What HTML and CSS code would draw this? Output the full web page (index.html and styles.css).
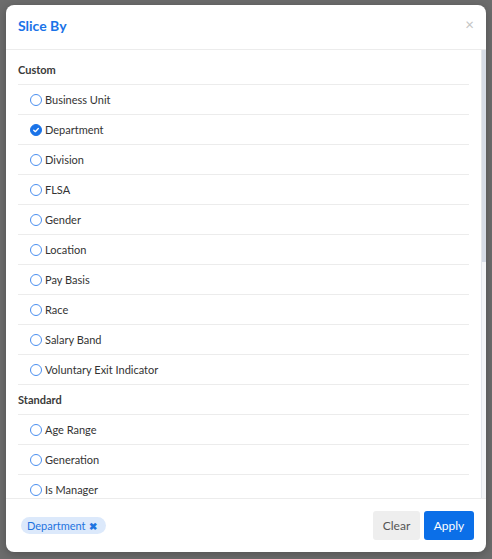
FILE: index.html
```html
<!DOCTYPE html>
<html lang="en">
<head>
    <meta charset="UTF-8">
    <title>Slice By</title>
    <link rel="stylesheet" href="styles.css">
</head>
<body>
    <div class="backdrop">
        <div class="modal">
            <div class="modal-header">
                <h2 class="modal-title">Slice By</h2>
                <span class="close-btn">&times;</span>
            </div>

            <div class="body-wrap">
                <div class="modal-body">
                    <div class="group-title">Custom</div>
                    <ul class="option-list">
                        <li class="option"><span class="radio"></span>Business Unit</li>
                        <li class="option"><span class="radio checked"><svg viewBox="0 0 12 12" width="12" height="12"><path d="M3.3 6.2 L5.2 8 L8.8 4.2" fill="none" stroke="#fff" stroke-width="1.6" stroke-linecap="round" stroke-linejoin="round"/></svg></span>Department</li>
                        <li class="option"><span class="radio"></span>Division</li>
                        <li class="option"><span class="radio"></span>FLSA</li>
                        <li class="option"><span class="radio"></span>Gender</li>
                        <li class="option"><span class="radio"></span>Location</li>
                        <li class="option"><span class="radio"></span>Pay Basis</li>
                        <li class="option"><span class="radio"></span>Race</li>
                        <li class="option"><span class="radio"></span>Salary Band</li>
                        <li class="option"><span class="radio"></span>Voluntary Exit Indicator</li>
                    </ul>

                    <div class="group-title">Standard</div>
                    <ul class="option-list">
                        <li class="option"><span class="radio"></span>Age Range</li>
                        <li class="option"><span class="radio"></span>Generation</li>
                        <li class="option"><span class="radio"></span>Is Manager</li>
                        <li class="option"><span class="radio"></span>Job Family</li>
                        <li class="option"><span class="radio"></span>Job Function</li>
                        <li class="option"><span class="radio"></span>Job Level</li>
                        <li class="option"><span class="radio"></span>Job Title</li>
                        <li class="option"><span class="radio"></span>Management Level</li>
                        <li class="option"><span class="radio"></span>Manager</li>
                        <li class="option"><span class="radio"></span>Performance Rating</li>
                        <li class="option"><span class="radio"></span>Tenure</li>
                        <li class="option"><span class="radio"></span>Worker Type</li>
                    </ul>
                </div>
                <!-- drawn scrollbar, the native one is hidden in the capture -->
                <div class="scroll-track"><div class="scroll-thumb"></div></div>
            </div>

            <div class="modal-footer">
                <span class="chip">Department <span class="chip-x">&#10006;</span></span>
                <div class="actions">
                    <button class="btn btn-clear">Clear</button>
                    <button class="btn btn-apply">Apply</button>
                </div>
            </div>
        </div>
    </div>
</body>
</html>
```

FILE: styles.css
```css
* {
    margin: 0;
    padding: 0;
    box-sizing: border-box;
}

body {
    font-family: 'Lato', 'Liberation Sans', sans-serif;
    background: #6c6c6c;
    color: #333;
}

.backdrop {
    width: 492px;
    height: 559px;
    padding: 5px 6px;
}

.modal {
    width: 480px;
    height: 547px;
    background: #fff;
    border-radius: 8px;
    box-shadow: 0 2px 10px rgba(0,0,0,0.25);
    display: flex;
    flex-direction: column;
    overflow: hidden;
}

.modal-header {
    height: 45px;
    flex-shrink: 0;
    display: flex;
    align-items: center;
    justify-content: space-between;
    padding: 0 12px;
    border-bottom: 1px solid #ececec;
}

.modal-title {
    font-size: 14px;
    font-weight: bold;
    color: #1a73e8;
    margin-top: -3px;
}

.close-btn {
    font-size: 15px;
    color: #c4c4c4;
    margin-top: -6px;
}

.body-wrap {
    flex: 1;
    position: relative;
    overflow: hidden;
}

.modal-body {
    height: 100%;
    overflow-y: auto;
    scrollbar-width: none;
    padding: 5px 17px 0 12px;
}

.modal-body::-webkit-scrollbar {
    display: none;
}

.scroll-track {
    position: absolute;
    top: 0;
    right: 0;
    bottom: 0;
    width: 5px;
    background: #f5f6f8;
    border-left: 1px solid #e4e7ec;
}

.scroll-thumb {
    height: 212px;
    background: #d6dce6;
}

.group-title {
    height: 30px;
    display: flex;
    align-items: center;
    font-size: 11px;
    font-weight: bold;
    color: #3a3a3a;
    border-bottom: 1px solid #ececec;
}

.option-list {
    list-style: none;
}

.option {
    height: 30px;
    display: flex;
    align-items: center;
    padding-left: 12px;
    font-size: 11px;
    color: #333;
    border-bottom: 1px solid #ececec;
}

.radio {
    width: 12px;
    height: 12px;
    border: 1px solid #4a8ff0;
    border-radius: 50%;
    margin-right: 3px;
    display: flex;
    align-items: center;
    justify-content: center;
    flex-shrink: 0;
}

.radio.checked {
    background: #1a73e8;
    border-color: #1a73e8;
}

.modal-footer {
    height: 54px;
    flex-shrink: 0;
    border-top: 1px solid #ececec;
    display: flex;
    align-items: center;
    justify-content: space-between;
    padding: 0 12px 0 15px;
}

.chip {
    background: #dce9fb;
    color: #1f74e0;
    font-size: 11px;
    height: 17px;
    line-height: 17px;
    padding: 0 9px 0 6px;
    border-radius: 9px;
}

.chip-x {
    font-size: 10px;
    font-weight: bold;
    margin-left: 1px;
}

.actions {
    display: flex;
    gap: 4px;
}

.btn {
    height: 29px;
    border: none;
    border-radius: 3px;
    font-family: inherit;
    font-size: 12px;
    cursor: pointer;
}

.btn-clear {
    width: 47px;
    background: #eeeeee;
    color: #555;
}

.btn-apply {
    width: 50px;
    background: #0b6fe8;
    color: #fff;
}
```
